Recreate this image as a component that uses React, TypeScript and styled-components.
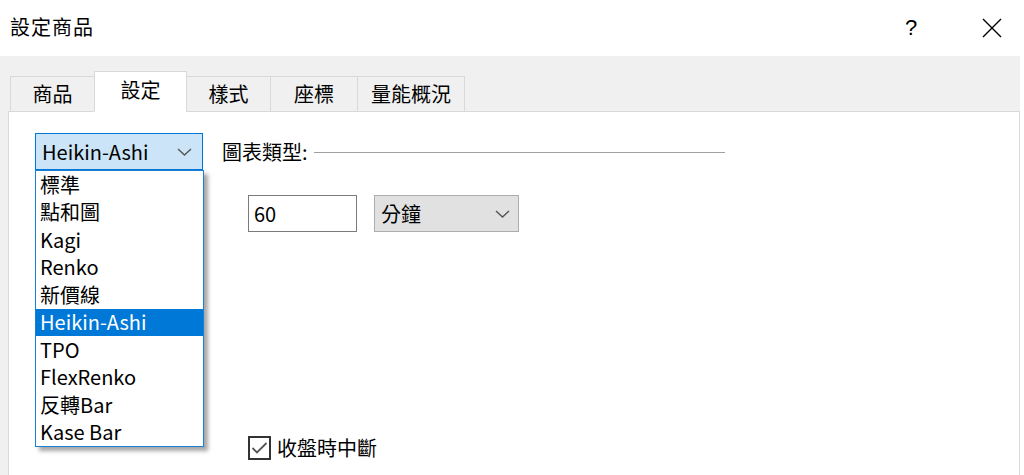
import React from 'react';
import styled, { createGlobalStyle } from 'styled-components';

const GlobalStyle = createGlobalStyle`
  html, body {
    margin: 0;
    padding: 0;
    background: #fff;
  }
  body {
    font-family: "Noto Sans CJK TC", "Noto Sans", sans-serif;
    color: #000;
  }
`;

const Window = styled.div`
  width: 1024px;
  height: 475px;
  overflow: hidden;
  background: #fff;
  font-size: 20px;
  line-height: 1;
`;

const TitleBar = styled.div`
  height: 56px;
  display: flex;
  align-items: center;
  padding: 0 12px 0 10px;
  box-sizing: border-box;
`;

const Title = styled.div`
  flex: 1;
  letter-spacing: 1px;
  padding-bottom: 2px;
`;

const TitleButtons = styled.div`
  display: flex;
  gap: 41px;
`;

const TitleButton = styled.div`
  width: 40px;
  display: flex;
  justify-content: center;
  align-items: center;
  height: 56px;
  font-family: "Liberation Sans", sans-serif;
  font-size: 22px;
`;

const Body = styled.div`
  background: #f0f0f0;
  margin-right: 4px;
  padding: 15px 0 0 8px;
  height: 420px;
  box-sizing: border-box;
`;

const TabStrip = styled.div`
  display: flex;
  align-items: flex-end;
  padding-left: 3px;
  position: relative;
  z-index: 1;
  margin-bottom: -1px;
`;

const Tab = styled.div<{ $w: number; $active?: boolean }>`
  width: ${p => p.$w}px;
  height: ${p => (p.$active ? 41 : 36)}px;
  box-sizing: border-box;
  display: flex;
  justify-content: center;
  align-items: center;
  padding-bottom: ${p => (p.$active ? 4 : 0)}px;
  background: ${p => (p.$active ? '#fff' : '#f0f0f0')};
  border: 1px solid #d9d9d9;
  border-bottom: ${p => (p.$active ? '1px solid #fff' : '1px solid #d9d9d9')};
  margin-left: -1px;
`;

const Panel = styled.div`
  background: #fff;
  border: 1px solid #d9d9d9;
  height: 400px;
  box-sizing: border-box;
  padding: 21px 0 0 26px;
  display: flex;
  gap: 19px;
`;

const ComboWrap = styled.div`
  position: relative;
  width: 168px;
  height: 37px;
  flex-shrink: 0;
`;

const Combo = styled.div`
  height: 37px;
  box-sizing: border-box;
  border: 1px solid #0078d7;
  background: #cce4f7;
  display: flex;
  align-items: center;
  justify-content: space-between;
  padding: 0 10px 0 6px;
`;

const Chevron = styled.svg`
  width: 15px;
  height: 8px;
  flex-shrink: 0;
`;

const DropList = styled.div`
  position: absolute;
  top: 37px;
  left: 0;
  width: 169px;
  box-sizing: border-box;
  border: 1px solid #1a7fd6;
  background: #fff;
  box-shadow: 4px 4px 4px rgba(0, 0, 0, 0.35);
  z-index: 5;
`;

const DropItem = styled.div<{ $sel?: boolean }>`
  height: 27.5px;
  display: flex;
  align-items: center;
  padding-left: 4px;
  background: ${p => (p.$sel ? '#0078d7' : 'transparent')};
  color: ${p => (p.$sel ? '#fff' : '#000')};
`;

const RightCol = styled.div`
  width: 503px;
  display: flex;
  flex-direction: column;
`;

const GroupHeader = styled.div`
  height: 37px;
  display: flex;
  align-items: center;
`;

const GroupLine = styled.div`
  flex: 1;
  height: 1px;
  background: #a0a0a0;
  margin-left: 6px;
  margin-top: 2px;
`;

const FieldRow = styled.div`
  display: flex;
  gap: 17px;
  margin-top: 25px;
  padding-left: 26px;
`;

const TextBox = styled.div`
  width: 109px;
  height: 37px;
  box-sizing: border-box;
  border: 1px solid #7a7a7a;
  display: flex;
  align-items: center;
  padding-left: 5px;
`;

const SelectBox = styled.div`
  width: 145px;
  height: 37px;
  box-sizing: border-box;
  border: 1px solid #adadad;
  background: #e1e1e1;
  display: flex;
  align-items: center;
  justify-content: space-between;
  padding: 0 8px 0 6px;
`;

const CheckRow = styled.div`
  display: flex;
  align-items: center;
  gap: 6px;
  margin-top: 204px;
  padding-left: 26px;
`;

const CheckBox = styled.div`
  width: 23px;
  height: 24px;
  box-sizing: border-box;
  border: 2px solid #333;
  display: flex;
  align-items: center;
  justify-content: center;
`;

const items = ['標準', '點和圖', 'Kagi', 'Renko', '新價線', 'Heikin-Ashi', 'TPO', 'FlexRenko', '反轉Bar', 'Kase Bar'];

const tabs: [string, number][] = [
  ['商品', 85],
  ['設定', 93],
  ['樣式', 85],
  ['座標', 88],
  ['量能概況', 108],
];

const Down = ({ color = '#555' }: { color?: string }) => (
  <Chevron viewBox="0 0 15 8">
    <path d="M1 1 L7.5 7 L14 1" fill="none" stroke={color} strokeWidth="1.4" />
  </Chevron>
);

export default function App() {
  return (
    <Window>
      <GlobalStyle />
      <TitleBar>
        <Title>設定商品</Title>
        <TitleButtons>
          <TitleButton>?</TitleButton>
          <TitleButton>
            <svg width="20" height="20" viewBox="0 0 20 20">
              <path d="M1 1 L19 19 M19 1 L1 19" stroke="#000" strokeWidth="1.4" />
            </svg>
          </TitleButton>
        </TitleButtons>
      </TitleBar>
      <Body>
        <TabStrip>
          {tabs.map(([label, w]) => (
            <Tab key={label} $w={w} $active={label === '設定'}>
              {label}
            </Tab>
          ))}
        </TabStrip>
        <Panel>
          <ComboWrap>
            <Combo>
              <span>Heikin-Ashi</span>
              <Down />
            </Combo>
            <DropList>
              {items.map(it => (
                <DropItem key={it} $sel={it === 'Heikin-Ashi'}>
                  {it}
                </DropItem>
              ))}
            </DropList>
          </ComboWrap>
          <RightCol>
            <GroupHeader>
              <span>圖表類型:</span>
              <GroupLine />
            </GroupHeader>
            <FieldRow>
              <TextBox>60</TextBox>
              <SelectBox>
                <span>分鐘</span>
                <Down />
              </SelectBox>
            </FieldRow>
            <CheckRow>
              <CheckBox>
                <svg width="17" height="14" viewBox="0 0 17 14">
                  <path d="M1.5 7 L6 11.5 L15.5 2" fill="none" stroke="#555" strokeWidth="1.8" />
                </svg>
              </CheckBox>
              <span>收盤時中斷</span>
            </CheckRow>
          </RightCol>
        </Panel>
      </Body>
    </Window>
  );
}
